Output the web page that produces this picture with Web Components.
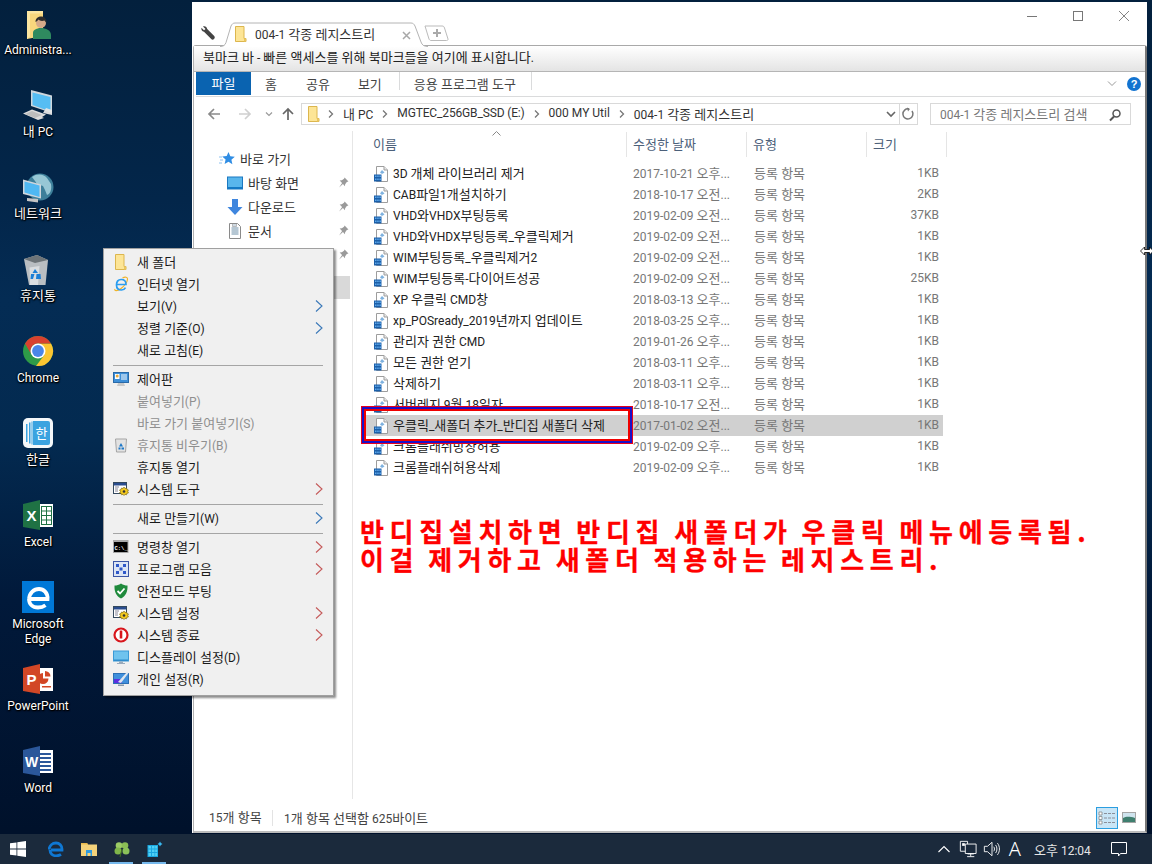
<!DOCTYPE html>
<html lang="ko">
<head>
<meta charset="utf-8">
<title>desktop</title>
<style>
html,body{margin:0;padding:0;width:1152px;height:864px;overflow:hidden}
body{font:12px Roboto,"Noto Sans CJK KR",sans-serif;color:#1a1a1a}
</style>
</head>
<body>
<win-desktop>
  <desk-icon slot="icons" icon="admin" top="8" label="Administra..."></desk-icon>
  <desk-icon slot="icons" icon="pc" top="90" label="내 PC"></desk-icon>
  <desk-icon slot="icons" icon="network" top="172" label="네트워크"></desk-icon>
  <desk-icon slot="icons" icon="recycle" top="254" label="휴지통"></desk-icon>
  <desk-icon slot="icons" icon="chrome" top="336" label="Chrome"></desk-icon>
  <desk-icon slot="icons" icon="hwp" top="418" label="한글"></desk-icon>
  <desk-icon slot="icons" icon="excel" top="500" label="Excel"></desk-icon>
  <desk-icon slot="icons" icon="edge" top="581" label="Microsoft Edge" gap="2"></desk-icon>
  <desk-icon slot="icons" icon="ppt" top="664" label="PowerPoint"></desk-icon>
  <desk-icon slot="icons" icon="word" top="746" label="Word"></desk-icon>

  <explorer-window slot="window">
    <nav-item slot="nav" level="0" icon="star" label="바로 가기"></nav-item>
    <nav-item slot="nav" level="1" icon="desktop" label="바탕 화면" pin></nav-item>
    <nav-item slot="nav" level="1" icon="download" label="다운로드" pin></nav-item>
    <nav-item slot="nav" level="1" icon="doc" label="문서" pin></nav-item>
    <nav-item slot="nav" level="1" label="" pin></nav-item>
    <nav-item slot="nav" level="1" label="" selected></nav-item>

    <file-row slot="files" name="3D 개체 라이브러리 제거" date="2017-10-21 오후..." size="1KB"></file-row>
    <file-row slot="files" name="CAB파일1개설치하기" date="2018-10-17 오전..." size="2KB"></file-row>
    <file-row slot="files" name="VHD와VHDX부팅등록" date="2019-02-09 오전..." size="37KB"></file-row>
    <file-row slot="files" name="VHD와VHDX부팅등록_우클릭제거" date="2019-02-09 오전..." size="1KB"></file-row>
    <file-row slot="files" name="WIM부팅등록_우클릭제거2" date="2019-02-09 오전..." size="1KB"></file-row>
    <file-row slot="files" name="WIM부팅등록-다이어트성공" date="2019-02-09 오전..." size="25KB"></file-row>
    <file-row slot="files" name="XP 우클릭 CMD창" date="2018-03-13 오후..." size="1KB"></file-row>
    <file-row slot="files" name="xp_POSready_2019년까지 업데이트" date="2018-03-25 오후..." size="1KB"></file-row>
    <file-row slot="files" name="관리자 권한 CMD" date="2019-01-26 오후..." size="1KB"></file-row>
    <file-row slot="files" name="모든 권한 얻기" date="2018-03-11 오후..." size="1KB"></file-row>
    <file-row slot="files" name="삭제하기" date="2018-03-11 오후..." size="1KB"></file-row>
    <file-row slot="files" name="서버레지 9월 18일자" date="2018-10-17 오전..." size="1KB"></file-row>
    <file-row slot="files" name="우클릭_새폴더 추가_반디집 새폴더 삭제" date="2017-01-02 오전..." size="1KB" selected></file-row>
    <file-row slot="files" name="크롬플래쉬방상허용" date="2019-02-09 오후..." size="1KB"></file-row>
    <file-row slot="files" name="크롬플래쉬허용삭제" date="2019-02-09 오후..." size="1KB"></file-row>
  </explorer-window>

  <context-menu slot="menu">
    <menu-item icon="folder" label="새 폴더"></menu-item>
    <menu-item icon="ie" label="인터넷 열기"></menu-item>
    <menu-item label="보기(V)" arrow></menu-item>
    <menu-item label="정렬 기준(O)" arrow></menu-item>
    <menu-item label="새로 고침(E)"></menu-item>
    <menu-sep></menu-sep>
    <menu-item icon="control" label="제어판"></menu-item>
    <menu-item label="붙여넣기(P)" disabled></menu-item>
    <menu-item label="바로 가기 붙여넣기(S)" disabled></menu-item>
    <menu-item icon="bin" label="휴지통 비우기(B)" disabled></menu-item>
    <menu-item label="휴지통 열기"></menu-item>
    <menu-item icon="tools" label="시스템 도구" arrow red></menu-item>
    <menu-sep></menu-sep>
    <menu-item label="새로 만들기(W)" arrow></menu-item>
    <menu-sep></menu-sep>
    <menu-item icon="cmd" label="명령창 열기" arrow red></menu-item>
    <menu-item icon="programs" label="프로그램 모음" arrow red></menu-item>
    <menu-item icon="shield" label="안전모드 부팅"></menu-item>
    <menu-item icon="tools" label="시스템 설정" arrow red></menu-item>
    <menu-item icon="power" label="시스템 종료" arrow red></menu-item>
    <menu-item icon="display" label="디스플레이 설정(D)"></menu-item>
    <menu-item icon="personal" label="개인 설정(R)"></menu-item>
  </context-menu>

  <task-bar slot="taskbar"></task-bar>
</win-desktop>

<script>
const FOLDER = `<path d="M2 .5h9v12h2v3H2z" fill="#fde596"/><path d="M2.500.5H11v12h2v3H2.500z" fill="none" stroke="#dcb64e"/><path d="M11 12.500h2v3h-2z" fill="#eac55f"/>`
const ICONS = {
  folder: [16, FOLDER],
  ie: [16, `<path d="M2 13C1 15 4 15.500 8 12.500c3-2.300 6-6 6.500-9C15 1 12 .500 9.500 2" fill="none" stroke="#f0b429" stroke-width="1.200"/><path d="M4 8.500h9c0-3-2-5-4.800-5S3.500 5.500 3.500 9 5.500 14 8.500 14c2 0 3.300-1 4-2.300" fill="none" stroke="#2a9df0" stroke-width="1.700"/>`],
  control: [16, `<rect x=".5" y="1.500" width="15" height="10" fill="#3d8fd8" stroke="#2a6aa8"/><rect x="2" y="3" width="4.500" height="5" fill="#fff"/><circle cx="4.200" cy="5" r="1.500" fill="#e9a93a"/><path d="M8 4h6M8 6h6M8 8h6" stroke="#fff"/><path d="M5 12h6l1 3H4z" fill="#c9c9c9"/>`],
  bin: [16, `<path d="M2.500 2h11l-1 13h-9z" fill="#e2e2e2" stroke="#a5a5a5"/><path d="M8 6l2 3.500H6zM5.500 10.500h2v2h-2zM8.500 10.500h2.500v2H8.500z" fill="#1e78c8"/>`],
  tools: [16, `<rect x=".5" y="1.500" width="13" height="11" fill="#fff" stroke="#34495e"/><path d="M1 2h12v2.500H1z" fill="#2a4d8f"/><path d="M2 6h4M2 8h3M2 10h3" stroke="#889"/><path d="M11 6l1 1.500 1.500-.5.500 1.500 1.500.5-.8 1.300.8 1.500-1.500.5-.5 1.500-1.500-.5-1 1.200-1-1.200-1.500.5-.5-1.500L6.500 12l1-1.500-1-1.500L8 8.500l.5-1.500 1.500.5z" fill="#f2c81e" stroke="#6e5b05" stroke-width=".6"/><circle cx="11" cy="10.500" r="1.300" fill="#333"/>`],
  cmd: [16, `<rect x="0" y="1" width="15.500" height="13" fill="#a9a9a9"/><rect x="1" y="3" width="13.500" height="10" fill="#000"/><text x="1.500" y="10.500" font-size="5.500" font-weight="700" font-family="Liberation Mono,monospace" fill="#fff">C:\\_</text>`],
  programs: [16, `<rect x=".5" y=".5" width="15" height="15" fill="#dbe4f5" stroke="#3b55a5"/><path d="M3 3h3v3H3zM10 3h3v3h-3zM3 10h3v3H3zM10 10h3v3h-3zM6.500 6.500h3v3h-3z" fill="#2f58c9"/>`],
  shield: [16, `<path d="M8 .5c2.300 1.500 4 2 6.500 2 .3 6-1.500 10.500-6.500 13C3 13 1.200 8.500 1.500 2.500 4 2.500 5.700 2 8 .5z" fill="#1f8a3c"/><path d="M4.500 8l2.500 2.500L11.500 5.500" fill="none" stroke="#fff" stroke-width="1.800"/>`],
  power: [16, `<circle cx="8" cy="8" r="6.500" fill="#fff" stroke="#d8161c" stroke-width="2.200"/><path d="M8 3.500v8" stroke="#d8161c" stroke-width="2.600"/>`],
  display: [16, `<rect x=".5" y="2" width="15" height="10" fill="#6fc3ee" stroke="#3a9ad6"/><path d="M1 10.500h14V12H1z" fill="#2f8ccc"/><path d="M6 12.500h4v1.500h2v1H4v-1h2z" fill="#9ab"/>`],
  personal: [16, `<rect x=".5" y="2.500" width="15" height="10" fill="#3f8fdc" stroke="#2b6fb5"/><path d="M1 8h8v4H1z" fill="#5b2fe0"/><path d="M5 11l9-10 1.500 1L8 12z" fill="#dfe6ee"/><path d="M5 13.500h6v1.500H5z" fill="#8a9aaa"/>`],
  star: [16, `<path d="M9.500 1l1.800 4.300 4.500.4-3.400 3 1 4.500-3.900-2.400L5.600 13l1-4.500-3.400-3 4.500-.4z" fill="#2f8de4"/><path d="M0 6h3M1 9h3M0 12h3" stroke="#8cc1f0"/>`],
  desktop: [16, `<rect x=".5" y="2" width="15" height="12" fill="#59b6ec" stroke="#1b79c2"/><path d="M1 12h14v2H1z" fill="#1479c4"/>`],
  download: [16, `<path d="M5 0h6v8h4.500L8 16 .5 8H5z" fill="#3f86de"/>`],
  doc: [16, `<path d="M2.500 .5h8l3 3v12h-11z" fill="#fff" stroke="#8a8a8a"/><path d="M4.500 5h7M4.500 7h7M4.500 9h7M4.500 11h7" stroke="#6d8fa8"/><path d="M5.500 1v2.500h4V1" fill="#cfd9e2" stroke="#8a8a8a" stroke-width=".5"/>`],
  reg: [16, `<path d="M3.500 .5h7.500l3.500 3.500v11.500H3.500z" fill="#fff" stroke="#9d9d9d"/><path d="M11 .5V4h3.500" fill="#e8e8e8" stroke="#9d9d9d"/><path d="M9 4l2.500 2.500L9 8 7 6.500z" fill="#7fb2df"/><path d="M1 8.500h7.500v7H1z" fill="#1c5fa8"/><path d="M2 9.500h1.500V11H2zM4.200 9.500h1.500V11H4.200zM6.400 9.500h1.500V11H6.400zM2 12.500h1.500V14H2zM4.200 12.500h1.500V14H4.200zM6.400 12.500h1.500V14H6.400z" fill="#5ea8ea"/>`],
  pin: [10, `<path d="M6 .5l3.500 3.500-1.500.5-1.500 2-.2 2L4.500 6.300 1 9.500 3.700 5.500 1.500 3.200l2-.2 2-1.500z" fill="#9a9a9a"/>`],
  admin: [32, `<path d="M5 3h16v25L5 31z" fill="#f8d77d"/><path d="M5 3h16v2.500H8v23l-3 2.500z" fill="#fce6a1"/><path d="M11 31v-6c0-3 3-4 6-5h4c3 1 8 2 8 7v4z" fill="#2f8a5f"/><circle cx="19" cy="15" r="5" fill="#d4a98a"/><path d="M13.500 14c0-4 3-5.500 5.500-5.500s6 1.500 5.500 6.500l-2-2.500c-3 1-5 0-6-1-1 1-1.500 2-3 2.500z" fill="#2c2c2c"/>`],
  pc: [32, `<path d="M9 0l21 5.500V23L9 16z" fill="#cfd6dc"/><path d="M10.500 2.500l18 4.500V21.500L10.500 15z" fill="#56bdf3"/><path d="M24 18l6 2v5l-9-2z" fill="#e6e6e6" opacity=".95"/><path d="M1 23.500l9-4 14 5-4 2.500 2 1-6 2z" fill="#dcdcdc"/><path d="M3 24l7-3 10 4-7 3z" fill="#bdbdbd"/>`],
  network: [32, `<circle cx="18" cy="15" r="13.500" fill="#3d7f9a"/><path d="M10 5c5-4 12-3 15 1l4 6c1 6-1 10-4 11l-2-5-2-4-6-2-2-3z" fill="#a7d3df" opacity=".85"/><path d="M1 7.500l18 5v14L1 22z" fill="#cfd6dc"/><path d="M2.500 9.500l15 4V25l-15-4.500z" fill="#4fb8f2"/><path d="M5 26l11 1v3.500L5 29z" fill="#c4c4c4"/>`],
  recycle: [32, `<path d="M2 5l13-4 11 5-2.500 25H7z" fill="#b9bec2"/><path d="M2 5l13-4 11 5-13 3z" fill="#6d7478"/><path d="M7.500 13.500l10-1.500L16 31H8z" fill="#d9dde0"/><path d="M13 15l3 4-5.500 0zM9 20h3.500l-1.500 5H8.500zM14.500 20l4 0 .5 5h-5z" fill="#1b7fd6"/>`],
  chrome: [32, `<g transform="translate(0 -1)"><circle cx="16" cy="16" r="15" fill="#2e9a48"/><path d="M16 8.500H29A15 15 0 0 1 14 30.900L22.500 19.750z" fill="#fbc531"/><path d="M16 1A15 15 0 0 0 3 8.500L9.500 19.750A7.500 7.500 0 0 1 16 8.500H29A15 15 0 0 0 16 1z" fill="#d8412f"/><circle cx="16" cy="16" r="7.500" fill="#fff"/><circle cx="16" cy="16" r="5.900" fill="#4a86e8"/></g>`],
  hwp: [32, `<rect x="1" y="0" width="30" height="30" rx="5" fill="#f4f7f9"/><path d="M11 3h15a2 2 0 0 1 2 2v20a2 2 0 0 1-2 2H11z" fill="#3ba3e0"/><path d="M4 6h1.500v18H4zM7 4.500h1.500v21H7zM9.500 3.500h1v23h-1z" fill="#3ba3e0"/><text x="19.500" y="20" text-anchor="middle" font-size="13" fill="#fff" font-family="Noto Sans CJK KR,sans-serif">한</text>`],
  excel: [32, `<path d="M16 4h15v23H16z" fill="#fff"/><path d="M19 6h11v19H19z" fill="#1f7244"/><path d="M20 7h4v3.500h-4zM25 7h4v3.500h-4zM20 11.500h4V15h-4zM25 11.500h4V15h-4zM20 16h4v3.500h-4zM25 16h4v3.500h-4zM20 20.500h4V24h-4zM25 20.500h4V24h-4z" fill="#fff"/><path d="M1 4L18 0v30L1 27z" fill="#1f7244"/><text x="9.500" y="21" text-anchor="middle" font-size="15" font-weight="700" fill="#fff" font-family="Liberation Sans,sans-serif">X</text>`],
  edge: [32, `<rect width="32" height="32" fill="#0078d7"/><path d="M9 18h16.500c.5-6.500-4-10-8.500-10-5 0-9.500 3.500-10 10" fill="none" stroke="#fff" stroke-width="3.800"/><path d="M7 18c0 5 3.500 8.500 9 8.500 3 0 5.500-.8 7.500-2.200" fill="none" stroke="#fff" stroke-width="3.800"/>`],
  ppt: [32, `<path d="M16 4h15v23H16z" fill="#fff"/><path d="M21 9a5.500 5.500 0 1 0 5.500 5.500H21z" fill="#d24726"/><path d="M23 7v5.500h5.500A5.500 5.500 0 0 0 23 7z" fill="#d24726"/><path d="M20 22h9v1.500h-9z" fill="#d24726"/><path d="M1 4L18 0v30L1 27z" fill="#d24726"/><text x="9.500" y="21" text-anchor="middle" font-size="15" font-weight="700" fill="#fff" font-family="Liberation Sans,sans-serif">P</text>`],
  word: [32, `<path d="M16 4h15v23H16z" fill="#fff"/><path d="M18 7h11v2h-11zM18 11h11v2h-11zM18 15h11v2h-11zM18 19h11v2h-11zM18 23h11v2h-11z" fill="#2b579a"/><path d="M1 4L18 0v30L1 27z" fill="#2b579a"/><text x="9.500" y="21" text-anchor="middle" font-size="14" font-weight="700" fill="#fff" font-family="Liberation Sans,sans-serif">W</text>`],
  start: [16, `<path d="M0 2.300l6.500-.9v6.200H0zM7.300 1.300L16 0v7.600H7.300zM0 8.400h6.500v6.200L0 13.700zM7.300 8.400H16V16l-8.700-1.300z" fill="#fff"/>`],
  edgeTask: [16, `<path d="M3 9h11c.3-4.500-2.800-7-6-7C4.500 2 1.500 4.500 1 8.500" fill="none" stroke="#0f78d4" stroke-width="2.800"/><path d="M2 9c0 3.500 2.500 5.800 6 5.800 2 0 3.700-.5 5-1.400" fill="none" stroke="#0f78d4" stroke-width="2.800"/>`],
  explorerTask: [16, `<path d="M0 2h6l1 1.500h9V15H0z" fill="#f4d27a"/><path d="M0 2h6l1 1.500H0z" fill="#e8b94d"/><path d="M5 9h6v6H9.500v-3h-3v3H5z" fill="#2f9be0"/>`],
  clover: [16, `<circle cx="5" cy="4.500" r="3.300" fill="#9ccc65"/><circle cx="11" cy="4.500" r="3.300" fill="#8bbf55"/><circle cx="4" cy="10" r="3.500" fill="#7fb54a"/><circle cx="12" cy="10" r="3.500" fill="#8bc25a"/><path d="M8 8l-2 8" stroke="#3e6e1e"/>`],
  blueApp: [16, `<path d="M.5 4h10.500v12H.5z" fill="#1aa7e0"/><path d="M1.500 5h2.500v2.500H1.500zM5 5h2.500v2.500H5zM8.200 5h2v2.500h-2zM1.500 8.500h2.500V11H1.500zM5 8.500h2.500V11H5zM8.200 8.500h2V11h-2zM1.500 12h2.500v3H1.500zM5 12h2.500v3H5zM8.200 12h2v3h-2z" fill="#4fd0f5"/><path d="M13 .5l.9 1.600 1.600.9-1.600.9-.9 1.600-.9-1.600-1.600-.9 1.600-.9z" fill="#39b8f0"/>`],
  traynet: [20, `<path d="M1.500 1.500h8v11h-8z" fill="none" stroke="#fff"/><path d="M7 4.500h12V15H7z" fill="#1b2a3c" stroke="#fff"/><path d="M9.500 15.500h7M13 15v3M9 18.500h8" stroke="#fff"/><path d="M3.500 3.500h3v3h-3z" fill="#fff"/>`],
  traysound: [20, `<path d="M1.500 7h3.500l5-4.500v15l-5-4.500H1.500z" fill="none" stroke="#fff"/><path d="M12 7.500c1 1.500 1 3.500 0 5M14 5.500c2 2.500 2 6.500 0 9M16 3.500c3 3.500 3 9.500 0 13" fill="none" stroke="#fff"/>`],
  notify: [16, `<path d="M.5 1.500h15v11H9.500L7.500 15v-2.500h-7z" fill="none" stroke="#fff"/>`]
}
function svg(name, size){
  const [box, body] = ICONS[name]
  const s = size || box
  return `<svg xmlns="http://www.w3.org/2000/svg" width="${s}" height="${s}" viewBox="0 0 ${box} ${box}" style="display:block">${body}</svg>`
}
// hangul in the reference runs 12px wide per glyph, latin stays at 12px
function ko(str){
  return str.replace(/[\uAC00-\uD7A3]+(?: [\uAC00-\uD7A3]+)*/g, m => `<span style="font-size:13px">${m}</span>`)
}

customElements.define("win-desktop", class extends HTMLElement{
  constructor(){
    super()
    this.attachShadow({mode: "open"}).innerHTML = `
      <style>
      :host{display:block;position:relative;width:1152px;height:864px;overflow:hidden;
        background:linear-gradient(180deg,#03203d 0,#03264a 200px,#042c54 300px,#032a50 440px,#01193a 600px,#00112b 830px)}
      </style>
      <slot name="icons"></slot>
      <slot name="window"></slot>
      <slot name="menu"></slot>
      <slot name="taskbar"></slot>`
  }
})

customElements.define("desk-icon", class extends HTMLElement{
  constructor(){
    super()
    const label = this.getAttribute("label")
    const gap = this.getAttribute("gap") || (/[\uAC00-\uD7A3]/.test(label) ? 0 : 1)
    this.attachShadow({mode: "open"}).innerHTML = `
      <style>
      :host{display:flex;flex-direction:column;align-items:center;position:absolute;left:0;width:76px}
      .lb{color:#fff;font-size:12px;line-height:15px;text-align:center;margin-top:${gap}px;
        text-shadow:0 1px 2px #000,1px 1px 1px #000,0 0 2px #000;width:70px}
      .ic{height:34px}
      </style>
      <div class="ic">${svg(this.getAttribute("icon"))}</div>
      <div class="lb">${ko(label)}</div>`
    this.style.top = this.getAttribute("top") + "px"
  }
})

customElements.define("explorer-window", class extends HTMLElement{
  constructor(){
    super()
    const crumb = `<span class="b"><svg width="6" height="8" viewBox="0 0 6 8" style="display:block"><path d="M1 .5l3.500 3.500L1 7.500" fill="none" stroke="#777" stroke-width="1.300"/></svg></span>`
    this.attachShadow({mode: "open"}).innerHTML = `
      <style>
      :host{display:flex;flex-direction:column;position:absolute;left:192px;top:2px;width:955px;height:831px;
        background:#fff;box-sizing:border-box}
      .up{padding-bottom:2px}
      .strip{height:43px;flex:none;display:flex;align-items:flex-end;position:relative}
      .wrench{width:16px;height:16px;margin:0 0 4px 8px}
      .tab{position:relative;width:208px;height:24px;margin-left:4px;display:flex;align-items:center;margin-bottom:-1px}
      .tab svg.shape{position:absolute;left:0;top:0}
      .tab .fi{position:relative;margin-left:13px}
      .tab .t{position:relative;margin-left:6px;font-size:12px;color:#333;white-space:nowrap}
      .tab .x{position:absolute;left:182px;top:7px}
      .newtab{margin:0 0 4px -4px}
      .newtab svg{display:block}
      .ctrls{position:absolute;right:0;top:0;display:flex}
      .ctrls div{width:46px;height:28px;display:flex;align-items:center;justify-content:center}
      .frame{flex:1;display:flex;flex-direction:column;margin:0 0 0 1px;border:1px solid #b3b3b3;border-top-color:#a9a9a9;
        border-right:2px solid #777;border-bottom:2px solid #bcbcbc;border-radius:3px 3px 0 0;min-height:0;background:#fff}
      .bm{flex:none;background:linear-gradient(#fff,#e4e4e4);border-bottom:1px solid #b5b5b5;
        display:flex;align-items:center;padding:0 0 2px 9px;font-size:12px;color:#222;box-sizing:border-box;height:26px}
      .body{flex:1;display:flex;flex-direction:column;margin:0 0 0 2px;min-height:0}
      .rib{height:24px;flex:none;display:flex;align-items:stretch;border-bottom:1px solid #dadbdc;font-size:12px;color:#444;position:relative}
      .rib .file{width:55px;background:#0a63b0;color:#fff;display:flex;align-items:center;justify-content:center;height:23px}
      .rib .tb{display:flex;align-items:center}
      .rib .sep{width:1px;background:#dadbdc;height:18px}
      .rib .right{margin-left:auto;display:flex;align-items:center;gap:10px;padding-right:4px}
      .addr{height:34px;flex:none;display:flex;align-items:center;position:relative}
      .navb{width:105px;display:flex;align-items:center;flex:none}
      .box{height:22px;box-sizing:border-box;border:1px solid #d9d9d9;display:flex;align-items:center;background:#fff}
      .path{width:617px;flex:none;padding-left:4px;color:#333;font-size:12px;white-space:nowrap}
      .path .b{margin:0 9px;display:inline-flex}
      .path .end{margin-left:auto;display:flex;align-items:center;height:100%}
      .search{width:201px;margin-left:12px;padding-left:9px;flex:none;color:#777;font-size:12px;position:relative}
      .search svg{position:absolute;right:7px;top:3px}
      .main{flex:1;display:flex;min-height:0;position:relative}
      .navp{width:157px;flex:none;border-right:1px solid #e6e6e6;padding-top:16px;box-sizing:border-box}
      .list{flex:1;min-width:0;display:flex;flex-direction:column}
      .heads{height:25px;margin-top:1px;flex:none;display:grid;grid-template-columns:266px 120px 120px 80px;margin-left:8px;font-size:12px;color:#4c607a;position:relative}
      .heads div{border-right:1px solid #e5e5e5;padding-left:12px;display:flex;align-items:center;position:relative}
      .heads div+div{padding-left:6px}
      .sort{position:absolute;left:131px;top:-1px}
      .rows{padding:6px 0 0 9px;display:flex;flex-direction:column}
      .status{height:33px;flex:none;display:flex;align-items:center;font-size:12px;color:#444;position:relative;padding:6px 0 0 13px;margin-top:-1px;box-sizing:border-box}
      .status .n{width:63px;border-right:1px solid #e3e3e3;line-height:16px;margin-right:11px}
      .views{margin-left:auto;display:flex;align-items:center;margin-right:5px}
      .v1{width:22px;height:22px;box-sizing:border-box;background:#c9e5f6;border:1px solid #2b9ee0;display:flex;align-items:center;justify-content:center}
      .v2{width:22px;height:22px;display:flex;align-items:center;justify-content:center}
      </style>
      <div class="strip">
        <div class="wrench"><svg width="16" height="16" viewBox="0 0 16 16"><path d="M3 1.500c2-.8 4 .5 4.200 2.500l7 7c.8 1 .8 2-.2 3s-2 .8-3-.2l-7-7C2 6.500 .8 4.500 1.500 2.800L4 5.300 5.500 4z" fill="#444"/></svg></div>
        <div class="tab">
          <svg class="shape" width="208" height="25" viewBox="0 0 208 25"><path d="M0 24.500c3 0 5-1 6-4L11 4c1-2 2-3 4-3h176c2 0 3 1 4 3l6 16c1 3 3 4.500 7 4.500" fill="#fff" stroke="#b4b4b4"/></svg>
          <div class="fi">${svg("folder")}</div>
          <div class="t up">${ko("004-1 각종 레지스트리")}</div>
          <div class="x"><svg width="9" height="9" viewBox="0 0 9 9"><path d="M1 1l7 7M8 1l-7 7" stroke="#a8a8a8" stroke-width="1.500"/></svg></div>
        </div>
        <div class="newtab"><svg width="26" height="16" viewBox="0 0 26 16"><path d="M1 1h17c1.500 0 2 .5 2.500 2L24 14c.2 1-.5 1.500-1.500 1.500H7c-1 0-1.500-.5-2-1.500z" fill="#fff" stroke="#bbb"/><path d="M13 4v8M9 8h8" stroke="#aaa" stroke-width="2"/></svg></div>
        <div class="ctrls">
          <div><svg width="10" height="10"><path d="M0 5.500h10" stroke="#777"/></svg></div>
          <div><svg width="10" height="10"><rect x=".5" y=".5" width="9" height="9" fill="none" stroke="#777"/></svg></div>
          <div><svg width="10" height="10"><path d="M0 0l10 10M10 0L0 10" stroke="#777" stroke-width=".9"/></svg></div>
        </div>
      </div>
      <div class="frame">
        <div class="bm"><span class="up">${ko("북마크 바 - 빠른 액세스를 위해 북마크들을 여기에 표시합니다.")}</span></div>
        <div class="body">
          <div class="rib">
            <div class="file"><span class="up">${ko("파일")}</span></div>
            <div class="tb" style="margin-left:14px"><span class="up">${ko("홈")}</span></div>
            <div class="tb" style="margin-left:29px"><span class="up">${ko("공유")}</span></div>
            <div class="tb" style="margin-left:28px"><span class="up">${ko("보기")}</span></div>
            <div class="sep" style="margin-left:17px"></div>
            <div class="tb" style="margin-left:14px"><span class="up">${ko("응용 프로그램 도구")}</span></div>
            <div class="sep" style="margin-left:15px"></div>
            <div class="right">
              <svg width="10" height="6" viewBox="0 0 10 6"><path d="M1 .5l4 4 4-4" fill="none" stroke="#999"/></svg>
              <svg width="14" height="14" viewBox="0 0 14 14"><circle cx="7" cy="7" r="7" fill="#1273d0"/><text x="7" y="11" text-anchor="middle" font-size="11" font-weight="700" fill="#fff" font-family="Liberation Sans,sans-serif">?</text></svg>
            </div>
          </div>
          <div class="addr">
            <div class="navb">
              <svg width="100" height="16" viewBox="0 0 100 16" style="margin-left:11px;flex:none">
                <path d="M13 8H2M7 3L2 8l5 5" fill="none" stroke="#8a8a8a" stroke-width="1.700"/>
                <path d="M32 8h11M38 3l5 5-5 5" fill="none" stroke="#d0d0d0" stroke-width="1.700"/>
                <path d="M59 6.500l3 3 3-3" fill="none" stroke="#9a9a9a" stroke-width="1.200"/>
                <path d="M81 14V3M76 8l5-5 5 5" fill="none" stroke="#666" stroke-width="1.700"/>
              </svg>
            </div>
            <div class="box path">
              <span style="display:inline-flex;margin-right:-3px">${svg("folder")}</span>
              ${crumb}<span class="up">${ko("내 PC")}</span>
              ${crumb}<span class="up" style="letter-spacing:-.15px">MGTEC_256GB_SSD (E:)</span>
              ${crumb}<span class="up">000 MY Util</span>
              ${crumb}<span class="up">${ko("004-1 각종 레지스트리")}</span>
              <span class="end">
                <svg width="10" height="7" viewBox="0 0 10 7" style="margin-right:3px"><path d="M1 1l4 4 4-4" fill="none" stroke="#666" stroke-width="1.600"/></svg>
                <span style="width:1px;height:20px;background:#d9d9d9"></span>
                <svg width="17" height="14" viewBox="0 0 17 14"><path d="M12 4a5 5 0 1 1-3-2" fill="none" stroke="#777" stroke-width="1.500"/><path d="M7 .5l3 1.500-2 2.500z" fill="#777"/></svg>
              </span>
            </div>
            <div class="box search"><span class="up">${ko("004-1 각종 레지스트리 검색")}</span>
              <svg width="16" height="16" viewBox="0 0 16 16"><circle cx="9.500" cy="6.500" r="3.500" fill="none" stroke="#555" stroke-width="1.500"/><path d="M7 9.500L3 13.500" stroke="#555" stroke-width="2"/></svg>
            </div>
          </div>
          <div class="main">
            <div class="navp"><slot name="nav"></slot></div>
            <div class="list">
              <div class="heads">
                <div><span class="up">${ko("이름")}</span><svg class="sort" width="9" height="5" viewBox="0 0 9 5"><path d="M.5 4.500l4-4 4 4" fill="none" stroke="#888"/></svg></div>
                <div><span class="up">${ko("수정한 날짜")}</span></div><div><span class="up">${ko("유형")}</span></div><div><span class="up">${ko("크기")}</span></div>
              </div>
              <div class="rows"><slot name="files"></slot></div>
            </div>
          </div>
          <div class="status">
            <span class="n">${ko("15개 항목")}</span><span>${ko("1개 항목 선택함 625바이트")}</span>
            <div class="views">
              <div class="v1"><svg width="18" height="14" viewBox="0 0 18 14"><path d="M1 1h3v3H1zM1 5.500h3v3H1zM1 10h3v3H1z" fill="#fff" stroke="#888" stroke-width=".8"/><path d="M6 2.500h11M6 7h11M6 11.500h11" stroke="#8a8f99" stroke-dasharray="3 1"/></svg></div>
              <div class="v2"><svg width="14" height="11" viewBox="0 0 14 11"><rect x=".5" y=".5" width="13" height="10" fill="#cfe4ee" stroke="#a5a5a5"/><path d="M1 6c3-1 5-2 12 0v4H1z" fill="#3f7f6f"/></svg></div>
            </div>
          </div>
        </div>
      </div>
      <red-box></red-box>
      <red-note></red-note>
      <resize-cursor></resize-cursor>`
  }
})

customElements.define("nav-item", class extends HTMLElement{
  constructor(){
    super()
    const lv = this.getAttribute("level") === "1"
    const icon = this.getAttribute("icon")
    this.attachShadow({mode: "open"}).innerHTML = `
      <style>
      :host{display:flex;align-items:center;height:24px;font-size:12px;color:#333;position:relative;
        padding-left:${lv ? 31 : 23}px;box-sizing:border-box;white-space:nowrap}
      :host([selected]){background:#d9d9d9;margin:9px 2px 0 0;height:23px}
      .i{width:16px;height:16px;margin-right:5px}
      .l{padding-bottom:2px}
      .p{position:absolute;left:142px;top:6px}
      </style>
      ${icon ? `<div class="i">${svg(icon)}</div>` : ""}
      <span class="l">${ko(this.getAttribute("label"))}</span>
      ${this.hasAttribute("pin") ? `<div class="p">${svg("pin", 11)}</div>` : ""}`
  }
})

customElements.define("file-row", class extends HTMLElement{
  constructor(){
    super()
    this.attachShadow({mode: "open"}).innerHTML = `
      <style>
      :host{display:grid;grid-template-columns:264px 121px 112px 80px;height:21px;align-items:center;width:581px;font-size:12px;color:#777;white-space:nowrap;box-sizing:border-box}
      :host([selected]){background:#d0d0d0}
      .n{display:flex;align-items:center;color:#222;padding-left:11px}
      .n svg{margin-right:4px}
      .n span,.d,.t,.s{padding-bottom:2px}
      .d,.t{padding-left:7px}
      .s{text-align:right}
      </style>
      <div class="n">${svg("reg")}<span>${ko(this.getAttribute("name"))}</span></div>
      <div class="d">${ko(this.getAttribute("date"))}</div>
      <div class="t">${ko("등록 항목")}</div>
      <div class="s">${this.getAttribute("size")}</div>`
  }
})

// annotations drawn on top of the window
customElements.define("red-box", class extends HTMLElement{
  constructor(){
    super()
    this.attachShadow({mode: "open"}).innerHTML = `
      <style>
      :host{position:absolute;left:169px;top:404px;width:272px;height:38px;box-sizing:border-box;
        border:1px solid #e8001c;box-shadow:inset 0 0 0 2px #1a10c8,inset 0 0 0 4px #f00000}
      </style>`
  }
})

customElements.define("red-note", class extends HTMLElement{
  constructor(){
    super()
    this.attachShadow({mode: "open"}).innerHTML = `
      <style>
      :host{position:absolute;left:168px;top:515px;font:700 26px/28px "Noto Sans CJK KR",sans-serif;color:#f00;letter-spacing:5.7px;word-spacing:-4px;white-space:nowrap;-webkit-text-stroke:.3px #f00}
      </style>
      <div>반디집설치하면 반디집 새폴더가 우클릭 메뉴에등록됨.</div>
      <div>이걸 제거하고 새폴더 적용하는 레지스트리.</div>`
  }
})

customElements.define("resize-cursor", class extends HTMLElement{
  constructor(){
    super()
    this.attachShadow({mode: "open"}).innerHTML = `
      <style>:host{position:absolute;left:948px;top:244px;width:14px;height:10px}</style>
      <svg width="14" height="10" viewBox="0 0 14 10" style="display:block"><path d="M.5 5L4.500 1v2.500h5V1l4 4-4 4V6.500h-5V9z" fill="#fff" stroke="#000" stroke-width=".8"/></svg>`
  }
})

customElements.define("context-menu", class extends HTMLElement{
  constructor(){
    super()
    this.attachShadow({mode: "open"}).innerHTML = `
      <style>
      :host{position:absolute;left:103px;top:248px;width:231px;box-sizing:border-box;background:#f0f0f0;
        border:1px solid #a0a0a0;padding:2px 2px 5px;box-shadow:2px 2px 2px rgba(0,0,0,.45);display:flex;flex-direction:column}
      </style>
      <slot></slot>`
  }
})

customElements.define("menu-item", class extends HTMLElement{
  constructor(){
    super()
    const icon = this.getAttribute("icon")
    const stroke = this.hasAttribute("red") ? "#c55a5a" : "#3a78b8"
    this.attachShadow({mode: "open"}).innerHTML = `
      <style>
      :host{display:flex;align-items:center;height:22px;font-size:12px;color:#1a1a1a;position:relative;white-space:nowrap}
      :host([disabled]){color:#8f8f8f}
      .i{width:16px;height:16px;margin-left:7px;margin-right:8px;flex:none}
      .l{padding-bottom:2px}
      .a{position:absolute;right:8px;top:5px}
      </style>
      <div class="i">${icon ? svg(icon) : ""}</div>
      <span class="l">${ko(this.getAttribute("label"))}</span>
      ${this.hasAttribute("arrow") ? `<svg class="a" width="8" height="12" viewBox="0 0 8 12"><path d="M1 .5L7 6 1 11.500" fill="none" stroke="${stroke}" stroke-width="1.100"/></svg>` : ""}`
  }
})

customElements.define("menu-sep", class extends HTMLElement{
  constructor(){
    super()
    this.attachShadow({mode: "open"}).innerHTML = `
      <style>:host{display:block;height:1px;background:#a5a5a5;margin:4px 8px 2px 7px}</style>`
  }
})

customElements.define("task-bar", class extends HTMLElement{
  constructor(){
    super()
    this.attachShadow({mode: "open"}).innerHTML = `
      <style>
      :host{position:absolute;left:0;right:0;bottom:0;height:30px;background:#1b2a3c;display:flex;align-items:center;color:#fff;font-size:12px}
      .app{width:33px;height:30px;display:flex;align-items:center;justify-content:center;position:relative}
      .app.on::after{content:"";position:absolute;left:4px;right:5px;bottom:0;height:2px;background:#76b9ed}
      .start{width:36px}
      .tray{margin-left:auto;display:flex;align-items:center}
      .clock{width:58px;color:#e6e6e6;white-space:nowrap;margin:0 19px 0 13px}
      </style>
      <div class="app start">${svg("start")}</div>
      <div class="app" style="margin-left:3px">${svg("edgeTask")}</div>
      <div class="app">${svg("explorerTask")}</div>
      <div class="app on">${svg("clover")}</div>
      <div class="app on">${svg("blueApp")}</div>
      <div class="tray">
        <svg width="12" height="8" viewBox="0 0 12 8"><path d="M.5 7L6 1.500 11.500 7" fill="none" stroke="#fff" stroke-width="1.100"/></svg>
        <span style="margin-left:9px">${svg("traynet", 18)}</span>
        <span style="margin-left:6px">${svg("traysound", 18)}</span>
        <span style="font-size:20px;font-family:'Noto Sans',sans-serif;font-weight:300;margin-left:8px;line-height:20px">A</span>
        <span class="clock">${ko("오후")} 12:04</span>
        <span style="margin-right:25px">${svg("notify")}</span>
      </div>`
  }
})
</script>
</body>
</html>
